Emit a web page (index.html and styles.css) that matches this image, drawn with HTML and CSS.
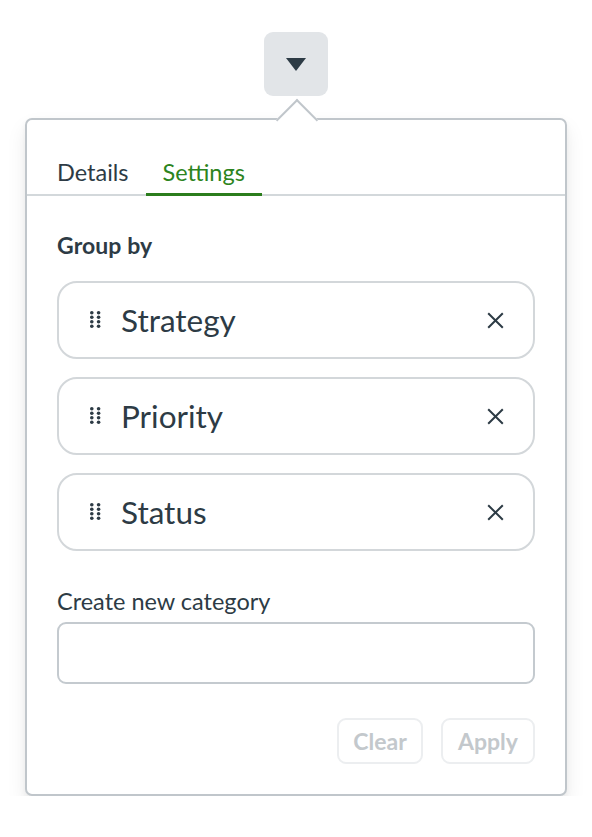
FILE: index.html
```html
<!DOCTYPE html>
<html lang="en">
<head>
<meta charset="utf-8">
<title>Group by settings</title>
<link rel="stylesheet" href="styles.css">
</head>
<body>
<div class="stage">
  <button class="trigger" type="button" aria-label="Toggle">
    <svg width="20" height="13" viewBox="0 0 20 13"><path d="M0 0 H20 L10 13 Z" fill="#2d3b45"/></svg>
  </button>
  <div class="popover">
    <div class="tabs">
      <div class="tab">Details</div>
      <div class="tab active">Settings</div>
    </div>
    <div class="panel">
      <div class="label-strong">Group by</div>
      <div class="items">
        <div class="item">
          <svg class="handle" width="11" height="17" viewBox="0 0 11 17"><g fill="#2d3b45"><circle cx="1.8" cy="1.8" r="1.8"/><circle cx="8.6" cy="1.8" r="1.8"/><circle cx="1.8" cy="6.3" r="1.8"/><circle cx="8.6" cy="6.3" r="1.8"/><circle cx="1.8" cy="10.8" r="1.8"/><circle cx="8.6" cy="10.8" r="1.8"/><circle cx="1.8" cy="15.2" r="1.8"/><circle cx="8.6" cy="15.2" r="1.8"/></g></svg>
          <span class="item-text">Strategy</span>
          <svg class="close" width="17" height="17" viewBox="0 0 17 17"><path d="M1.2 1.2 L15.8 15.8 M15.8 1.2 L1.2 15.8" stroke="#2d3b45" stroke-width="2" fill="none"/></svg>
        </div>
        <div class="item">
          <svg class="handle" width="11" height="17" viewBox="0 0 11 17"><g fill="#2d3b45"><circle cx="1.8" cy="1.8" r="1.8"/><circle cx="8.6" cy="1.8" r="1.8"/><circle cx="1.8" cy="6.3" r="1.8"/><circle cx="8.6" cy="6.3" r="1.8"/><circle cx="1.8" cy="10.8" r="1.8"/><circle cx="8.6" cy="10.8" r="1.8"/><circle cx="1.8" cy="15.2" r="1.8"/><circle cx="8.6" cy="15.2" r="1.8"/></g></svg>
          <span class="item-text">Priority</span>
          <svg class="close" width="17" height="17" viewBox="0 0 17 17"><path d="M1.2 1.2 L15.8 15.8 M15.8 1.2 L1.2 15.8" stroke="#2d3b45" stroke-width="2" fill="none"/></svg>
        </div>
        <div class="item">
          <svg class="handle" width="11" height="17" viewBox="0 0 11 17"><g fill="#2d3b45"><circle cx="1.8" cy="1.8" r="1.8"/><circle cx="8.6" cy="1.8" r="1.8"/><circle cx="1.8" cy="6.3" r="1.8"/><circle cx="8.6" cy="6.3" r="1.8"/><circle cx="1.8" cy="10.8" r="1.8"/><circle cx="8.6" cy="10.8" r="1.8"/><circle cx="1.8" cy="15.2" r="1.8"/><circle cx="8.6" cy="15.2" r="1.8"/></g></svg>
          <span class="item-text">Status</span>
          <svg class="close" width="17" height="17" viewBox="0 0 17 17"><path d="M1.2 1.2 L15.8 15.8 M15.8 1.2 L1.2 15.8" stroke="#2d3b45" stroke-width="2" fill="none"/></svg>
        </div>
      </div>
      <label class="field-label" for="newcat">Create new category</label>
      <input class="field" id="newcat" type="text">
      <div class="actions">
        <button class="btn btn-clear" type="button">Clear</button>
        <button class="btn btn-apply" type="button">Apply</button>
      </div>
    </div>
  </div>
</div>
</body>
</html>
```

FILE: styles.css
```css
* { box-sizing: border-box; }
html, body {
  margin: 0;
  padding: 0;
  background: #ffffff;
  font-family: Lato, "Liberation Sans", sans-serif;
  color: #2d3b45;
}
.stage {
  display: flex;
  flex-direction: column;
  align-items: center;
  padding-top: 32px;
}
.trigger {
  width: 64px;
  height: 64px;
  border: none;
  border-radius: 9px;
  background: #e2e5e8;
  display: flex;
  align-items: center;
  justify-content: center;
  padding: 0;
  padding-top: 1px;
}
.popover {
  position: relative;
  margin-top: 22px;
  width: 542px;
  border: 2px solid #c0c6cb;
  border-radius: 7px;
  background: #ffffff;
  box-shadow: 0 10px 20px rgba(0, 0, 0, 0.08), 0 3px 6px rgba(0, 0, 0, 0.05);
}
.popover::before {
  content: "";
  position: absolute;
  top: -15px;
  left: 50%;
  width: 28px;
  height: 28px;
  margin-left: -14px;
  background: #ffffff;
  border-top: 2px solid #c0c6cb;
  border-left: 2px solid #c0c6cb;
  transform: rotate(45deg);
}
.tabs {
  position: relative;
  display: flex;
  padding-left: 13px;
  border-bottom: 2px solid #d3d8db;
  border-top-left-radius: 7px;
  border-top-right-radius: 7px;
}
.tab {
  padding: 37px 17px 6px;
  font-size: 23.5px;
  line-height: 30px;
  color: #2d3b45;
  border-bottom: 3px solid transparent;
  margin-bottom: -2px;
}
.tab.active {
  color: #2c8420;
  border-bottom-color: #2b7d1c;
}
.panel {
  padding: 34px 30px 30px;
}
.label-strong {
  font-size: 23px;
  font-weight: 700;
  line-height: 30px;
  letter-spacing: 0.1px;
}
.items {
  display: flex;
  flex-direction: column;
  gap: 18px;
  margin-top: 21px;
}
.item {
  display: flex;
  align-items: center;
  height: 78px;
  padding: 0 29px 0 31px;
  border: 2px solid #d3d7da;
  border-radius: 20px;
}
.handle {
  flex: none;
  margin-top: -2px;
}
.item-text {
  flex: 1;
  margin-left: 20px;
  font-size: 31.5px;
  line-height: 40px;
}
.close {
  flex: none;
}
.field-label {
  display: block;
  margin-top: 35px;
  font-size: 23.5px;
  line-height: 30px;
}
.field {
  display: block;
  width: 100%;
  height: 62px;
  margin-top: 6px;
  border: 2px solid #c4cacf;
  border-radius: 9px;
  background: #ffffff;
  font-family: inherit;
  font-size: 22px;
  padding: 0 16px;
}
.actions {
  display: flex;
  justify-content: flex-end;
  gap: 18px;
  margin-top: 34px;
}
.btn {
  height: 46px;
  border: 2px solid #eceef0;
  border-radius: 9px;
  background: #ffffff;
  color: #c3c8cc;
  font-family: inherit;
  font-size: 23px;
  font-weight: 700;
  padding: 0;
}
.btn-clear { width: 86px; }
.btn-apply { width: 94px; }
```
